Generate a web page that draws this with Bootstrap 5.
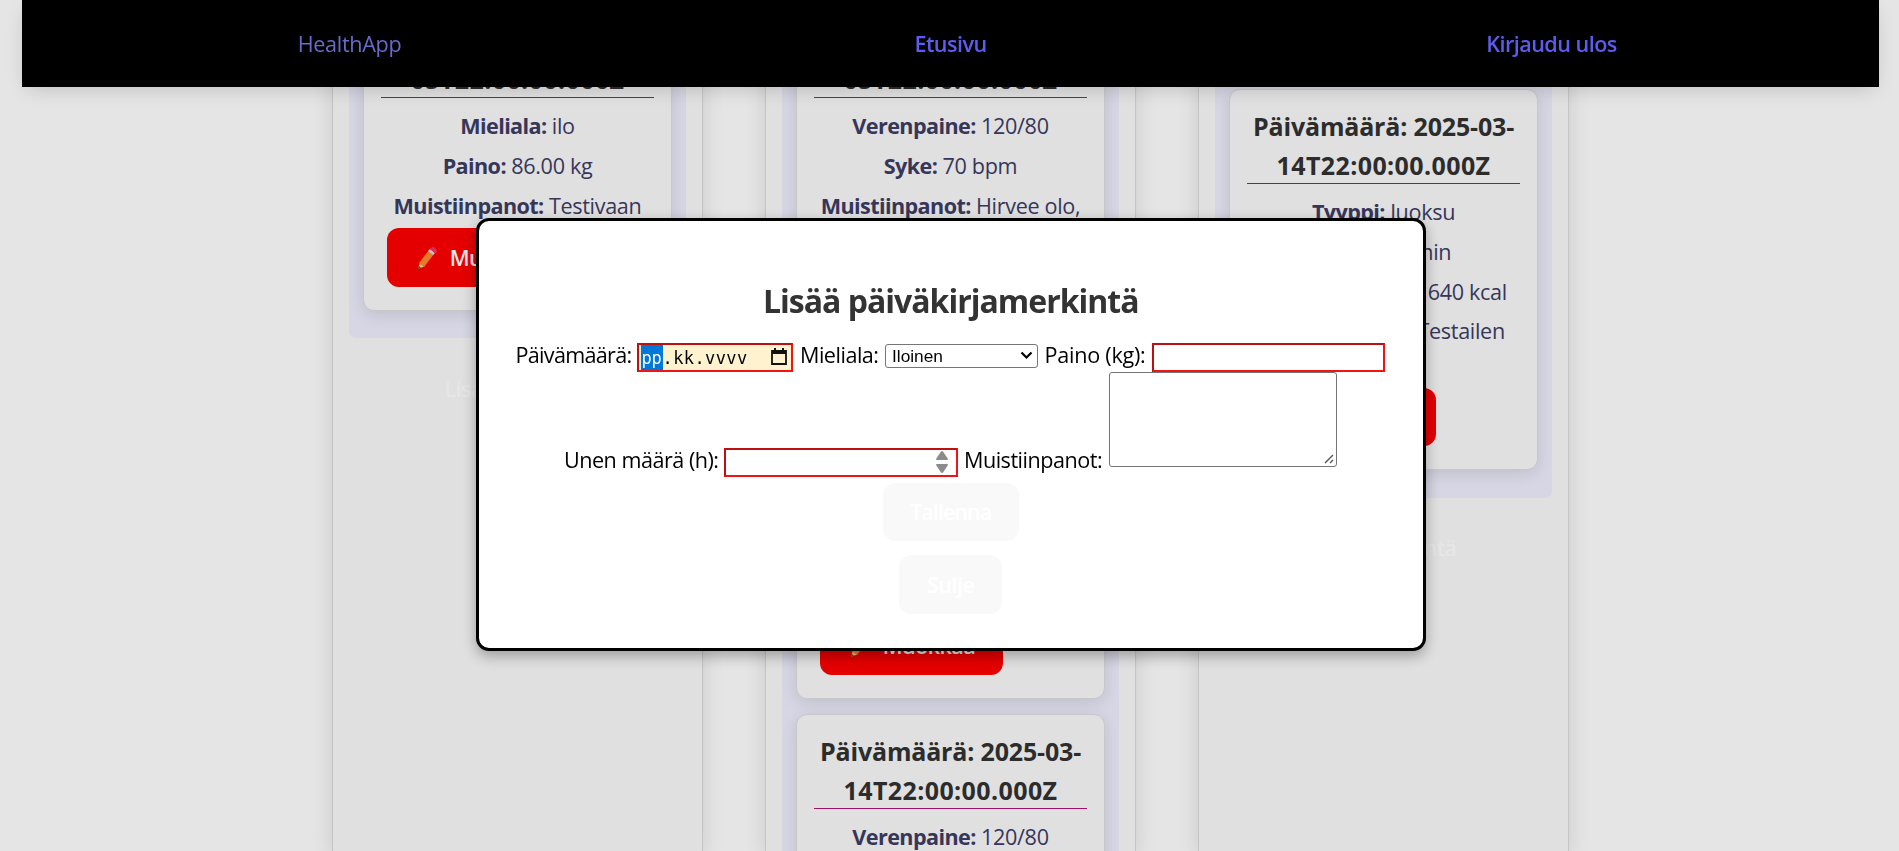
<!DOCTYPE html>
<html lang="fi">
<head>
<meta charset="utf-8">
<title>HealthApp</title>
<link href="https://cdn.jsdelivr.net/npm/bootstrap@5.3.0/dist/css/bootstrap.min.css" rel="stylesheet">
<style>
body{font-family:"Open Sans","Noto Sans",sans-serif;font-size:21.6px;line-height:33px;letter-spacing:-.33px;background:#e5e5e5;color:#000;height:851px;overflow:hidden}
b{font-weight:700;letter-spacing:-.6px}
.semi{font-weight:600;letter-spacing:-.55px}
.topbar{left:22px;right:20px;height:87px;background:#000;box-shadow:0 6px 20px -6px rgba(0,0,0,.2);z-index:5;padding:0 26px}
.topbar a{text-decoration:none;color:#5c5cf0;flex:0 0 601px;text-align:center}
.topbar a.brand{color:#6a6acb}
.columns{width:1237px;margin-left:332px;gap:62px;height:851px;overflow:clip;overflow-clip-margin:30px}
.column{width:371px;background:#e0e0e0;border:1px solid #c5c5c5;border-top:0;border-bottom:0;box-shadow:0 4px 20px rgba(0,0,0,.12);padding:0 16px}
.entries{background:#d6d6e4;border-radius:0 0 7px 7px;padding:3px 14px 27.5px}
.entry{background:#e0e0e0;border:1px solid #c8c8cb;border-radius:11px;padding:17px 17px 23px;box-shadow:0 4px 16px rgba(0,0,0,.1);color:#363659;text-align:center}
.entry + .entry{margin-top:15px}
.entry h3{font-size:25px;line-height:38.5px;height:77px;font-weight:700;color:#2c2c2c;border-bottom:1px solid #a0125f;margin:0 0 12px;letter-spacing:-.17px;white-space:nowrap}
.entry h3 span{letter-spacing:.4px}
.entry p{margin:0 0 7px;line-height:32.8px;white-space:nowrap}
.entry p:last-of-type{margin-bottom:6px}
.tall{height:696px}
.third{padding-top:89px}
.third .entry p:last-of-type{margin-bottom:7px}
.act{display:flex;align-items:center;border:0;border-radius:12px;height:58.5px;font-weight:600;color:#fff;justify-content:center;letter-spacing:-.6px}
.edit{background:#e50000;color:#e5e5e5;width:183px;margin-left:6px;gap:11px}
.addnew{color:#e6e6e6;margin-top:20px;padding-top:1px}
.dialogbox{left:476px;top:217.5px;width:949.5px;height:433px;background:#fff;border:3px solid #000;border-radius:13px;box-shadow:0 5px 14px rgba(0,0,0,.3);z-index:8;padding-top:58px}
.dialogbox h2{font-size:32px;line-height:44px;font-weight:700;color:#333;margin:0;text-align:center;letter-spacing:-1px}
.line1{margin:17px 0 0 36.5px;height:32.5px}
.line2{margin:0 0 0 85px;height:94.5px}
.field{border:2px solid #f01414;border-top-color:#bd1010;border-left-color:#bd1010;background:#fff;height:29px;flex:none}
.date{width:156.5px;background:#fff2cf;font-family:"DejaVu Sans Mono","Noto Sans",monospace;font-size:17px;line-height:26px;letter-spacing:.4px;padding-left:2px}
.date i{font-style:normal;background:#0078d7;color:#fff;height:25px;width:22px;padding-left:1px;letter-spacing:-.2px}
.choice{width:152.5px;height:24.5px;border:1px solid #767676;border-radius:3px;font:17.3px/22px "Liberation Sans",sans-serif;letter-spacing:0;padding:0 4px 0 6px}
.area{width:228px;height:94.5px;border:1px solid #767676;border-radius:3px;padding:0 2px 2px 0}
.lab{white-space:nowrap;flex:none;letter-spacing:-.5px}
.line1 .lab{line-height:30px}
.line1 .box{margin-top:3px}
.line1 .choice{margin-top:4px}
.pale{background:#f9f9f9}
</style>
<script src="https://cdn.jsdelivr.net/npm/bootstrap@5.3.0/dist/js/bootstrap.bundle.min.js"></script>
</head>
<body>
<svg class="d-none"><symbol id="pencil" viewBox="0 0 24 24"><path d="M3 23l2-7 5 4z" fill="#efb878"/><path d="M3 23l1-3 2 2z" fill="#444"/><path d="M4 17L14 4l5 4L9 21z" fill="#e77b25"/><path d="M13 5l2-2 5 4-2 2z" fill="#b8c6cc"/><path d="M15 3l1-1q2-2 4 0l1 1q2 2 0 4l-1 0z" fill="#df2b50"/></symbol></svg>

<nav class="topbar position-fixed top-0 d-flex align-items-center justify-content-center">
  <a class="brand" href="#">HealthApp</a><a class="semi" href="#">Etusivu</a><a class="semi" href="#">Kirjaudu ulos</a>
</nav>

<main class="columns d-flex">
  <section class="column">
    <div class="entries">
      <article class="entry">
        <h3>Päivämäärä: 2025-03-<br><span>05T22:00:00.000Z</span></h3>
        <p><b>Mieliala:</b> ilo</p>
        <p><b>Paino:</b> 86.00 kg</p>
        <p><b>Muistiinpanot:</b> Testivaan</p>
        <button class="act edit"><svg width="24" height="24"><use href="#pencil"/></svg>Muokkaa</button>
      </article>
    </div>
    <div class="addnew text-center act">Lisää merkintä</div>
  </section>
  <section class="column">
    <div class="entries">
      <article class="entry tall d-flex flex-column">
        <h3>Päivämäärä: 2025-03-<br><span>05T22:00:00.000Z</span></h3>
        <p><b>Verenpaine:</b> 120/80</p>
        <p><b>Syke:</b> 70 bpm</p>
        <p><b>Muistiinpanot:</b> Hirvee olo,</p>
        <button class="act edit mt-auto"><svg width="24" height="24"><use href="#pencil"/></svg>Muokkaa</button>
      </article>
      <article class="entry">
        <h3>Päivämäärä: 2025-03-<br><span>14T22:00:00.000Z</span></h3>
        <p><b>Verenpaine:</b> 120/80</p>
      </article>
    </div>
  </section>
  <section class="column">
    <div class="entries third">
      <article class="entry">
        <h3>Päivämäärä: 2025-03-<br><span>14T22:00:00.000Z</span></h3>
        <p><b>Tyyppi:</b> Juoksu</p>
        <p><b>Kesto:</b> 60 min</p>
        <p><b>Poltetut kalorit:</b> 640 kcal</p>
        <p><b>Muistiinpanot:</b> Testailen<br>&nbsp;</p>
        <button class="act edit"><svg width="24" height="24"><use href="#pencil"/></svg>Muokkaa</button>
      </article>
    </div>
    <div class="addnew text-center act">Lisää merkintä</div>
  </section>
</main>

<div class="dialogbox position-fixed">
  <h2>Lisää päiväkirjamerkintä</h2>
  <div class="line1 d-flex align-items-start">
    <span class="lab" style="width:121px;letter-spacing:-.7px">Päivämäärä:</span>
    <div class="field date d-flex box"><i>pp</i><span>.kk.vvvv</span>
      <svg class="ms-auto me-1" width="16" height="18" viewBox="0 0 16 18" style="margin-top:3px"><path d="M1 3h14v13H1z" fill="none" stroke="#111" stroke-width="1.8"/><path d="M1 2h14v4H1zM3 0h2v3H3zM11 0h2v3h-2z" fill="#111"/></svg></div>
    <span class="lab" style="width:92px;padding-left:7px">Mieliala:</span>
    <div class="choice d-flex justify-content-between align-items-center">Iloinen<svg width="13" height="9" viewBox="0 0 13 9"><path d="M1.5 1.5l5 5 5-5" fill="none" stroke="#000" stroke-width="2.2"/></svg></div>
    <span class="lab" style="width:114px;padding-left:7px;letter-spacing:-.25px">Paino (kg):</span>
    <div class="field box" style="width:233px"></div>
  </div>
  <div class="line2 d-flex">
    <span class="lab" style="width:160px;padding-top:71px">Unen määrä (h):</span>
    <div class="field d-flex align-items-center justify-content-end" style="width:234px;margin-top:75.5px;padding-right:8px"><svg width="12" height="22" viewBox="0 0 12 22"><path d="M6 0q1 0 2 2l4 6q0 1-1 1H1q-1 0-1-1l4-6q1-2 2-2zM6 22q1 0 2-2l4-6q0-1-1-1H1q-1 0-1 1l4 6q1 2 2 2z" fill="#8b8b8b"/></svg></div>
    <span class="lab" style="width:151px;padding:71px 0 0 6px">Muistiinpanot:</span>
    <div class="area d-flex align-items-end justify-content-end"><svg width="10" height="10" viewBox="0 0 10 10"><path d="M1 9l8-8M6 9l3-3" stroke="#555" stroke-width="1.4"/></svg></div>
  </div>
  <div class="d-flex flex-column align-items-center" style="padding-top:16px;gap:14px">
    <button class="act pale" style="width:136.5px;letter-spacing:-1px">Tallenna</button>
    <button class="act pale" style="width:103px;letter-spacing:-.5px">Sulje</button>
  </div>
</div>
</body>
</html>
